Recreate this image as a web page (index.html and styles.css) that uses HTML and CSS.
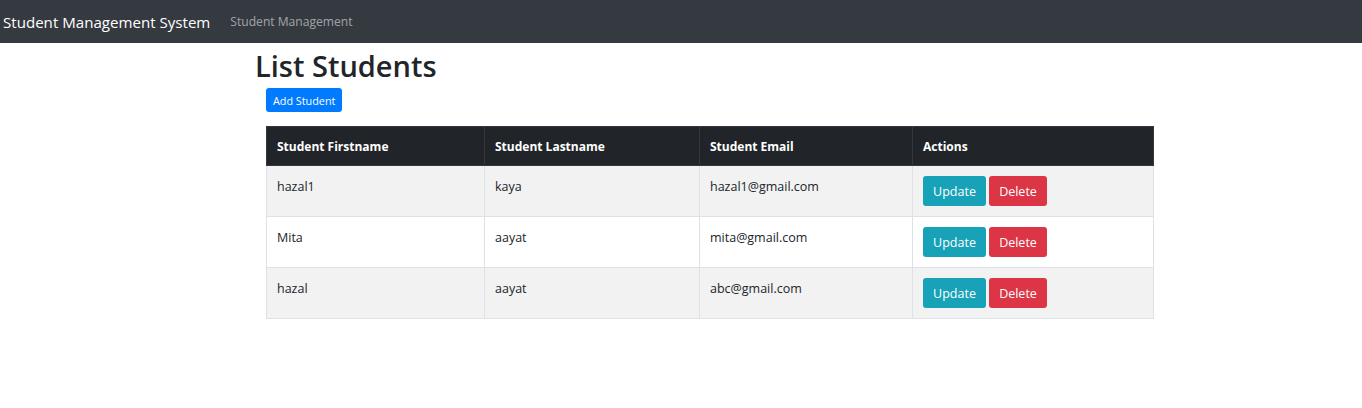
FILE: index.html
```html
<!DOCTYPE html>
<html>
<head>
<meta charset="utf-8">
<link rel="stylesheet" href="styles.css">
</head>
<body>
<nav class="navbar">
  <span class="brand">Student Management System</span>
  <span class="nav-link">Student Management</span>
</nav>
<main class="container">
  <h1 class="title">List Students</h1>
  <div class="content">
    <button class="btn btn-primary">Add Student</button>
    <table class="table">
      <thead>
        <tr>
          <th class="c1">Student Firstname</th>
          <th class="c2">Student Lastname</th>
          <th class="c3">Student Email</th>
          <th class="c4">Actions</th>
        </tr>
      </thead>
      <tbody>
        <tr class="odd">
          <td>hazal1</td><td>kaya</td><td>hazal1@gmail.com</td>
          <td><button class="btn btn-info">Update</button><button class="btn btn-danger">Delete</button></td>
        </tr>
        <tr>
          <td>Mita</td><td>aayat</td><td>mita@gmail.com</td>
          <td><button class="btn btn-info">Update</button><button class="btn btn-danger">Delete</button></td>
        </tr>
        <tr class="odd">
          <td>hazal</td><td>aayat</td><td>abc@gmail.com</td>
          <td><button class="btn btn-info">Update</button><button class="btn btn-danger">Delete</button></td>
        </tr>
      </tbody>
    </table>
  </div>
</main>
</body>
</html>
```
FILE: styles.css
```css
* { box-sizing: border-box; }
body {
  margin: 0;
  font-family: "Open Sans", "Noto Sans", sans-serif;
  color: #212529;
  background: #fff;
}
.navbar {
  height: 43px;
  background: #343a40;
  display: flex;
  align-items: center;
  padding-left: 3px;
}
.brand {
  color: #fff;
  font-size: 15.1px;
  margin-right: 20px;
}
.nav-link {
  color: rgba(255,255,255,0.55);
  font-size: 12.1px;
}
.container {
  margin-left: 255px;
  width: 900px;
}
.title {
  margin: 2px 0 0;
  font-size: 29px;
  font-weight: 600;
  line-height: 42px;
}
.content {
  padding-left: 11px;
}
.btn {
  border: none;
  border-radius: 3px;
  color: #fff;
  font-family: inherit;
  cursor: pointer;
}
.btn-primary {
  background: #007bff;
  font-size: 10.8px;
  height: 24px;
  padding: 0 7px;
  margin-top: 1px;
  display: block;
}
.table {
  margin-top: 14px;
  width: 888px;
  border-collapse: collapse;
  font-size: 12.5px;
}
.table th {
  background: #212529;
  color: #fff;
  text-align: left;
  font-weight: 700;
  height: 39px;
  padding: 0 10px;
  border: 1px solid #32383e;
  font-size: 12px;
}
.c1 { width: 218px; }
.c2 { width: 215px; }
.c3 { width: 213px; }
.table td {
  border: 1px solid #dee2e6;
  height: 51px;
  padding: 12px 10px 8px;
  vertical-align: top;
}
.table tr.odd td { background: #f2f2f2; }
.btn-info, .btn-danger {
  font-size: 12.5px;
  height: 30px;
  margin-top: -2px;
  vertical-align: top;
}
.btn-info { background: #17a2b8; width: 63px; margin-right: 3px; }
.btn-danger { background: #dc3545; width: 58px; }
```
